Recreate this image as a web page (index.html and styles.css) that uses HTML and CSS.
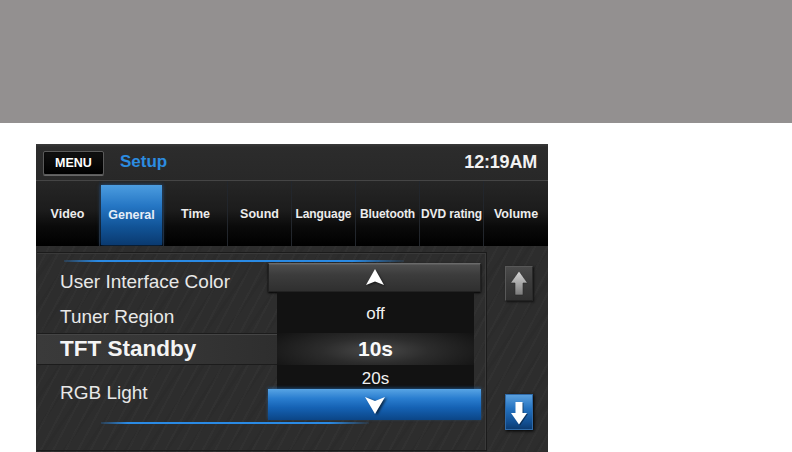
FILE: index.html
```html
<!DOCTYPE html>
<html>
<head>
<meta charset="utf-8">
<link rel="stylesheet" href="styles.css">
</head>
<body>
<div class="topband"></div>
<div class="device">
  <div class="header">
    <div class="menu-btn">MENU</div>
    <div class="title">Setup</div>
    <div class="clock">12:19AM</div>
  </div>
  <div class="tabs">
    <div class="tab">Video</div>
    <div class="tab active"><span>General</span></div>
    <div class="tab">Time</div>
    <div class="tab">Sound</div>
    <div class="tab narrow">Language</div>
    <div class="tab narrow">Bluetooth</div>
    <div class="tab narrow">DVD rating</div>
    <div class="tab">Volume</div>
  </div>
  <div class="content">
    <div class="panel">
      <div class="blueline top"></div>
      <div class="panel-body">
        <div class="labels">
          <div class="row r1">User Interface Color</div>
          <div class="row r2">Tuner Region</div>
          <div class="row r3">TFT Standby</div>
          <div class="row r4">RGB Light</div>
        </div>
        <div class="picker">
          <div class="pbtn up">
            <svg width="18" height="17" viewBox="0 0 18 17"><path d="M9 0 L18 16 L9 12.5 L0 16 Z" fill="#fff"/></svg>
          </div>
          <div class="plist">
            <div class="pitem off">off</div>
            <div class="pitem sel">10s</div>
            <div class="pitem next">20s</div>
          </div>
          <div class="pbtn down">
            <svg width="20" height="18" viewBox="0 0 20 18"><path d="M0 0 L10 4 L20 0 L10 17 Z" fill="#fff"/></svg>
          </div>
        </div>
      </div>
      <div class="blueline bottom"></div>
    </div>
    <div class="side">
      <div class="sbtn sup">
        <svg width="18" height="25" viewBox="0 0 18 25">
          <defs><linearGradient id="ga" x1="0" y1="0" x2="0" y2="1"><stop offset="0" stop-color="#d8d8d8"/><stop offset="1" stop-color="#7a7a7a"/></linearGradient></defs>
          <path d="M9 0 L17.5 12 L13 12 L13 24 L5 24 L5 12 L0.5 12 Z" fill="url(#ga)" stroke="#2a2a2a" stroke-width="0.6"/>
        </svg>
      </div>
      <div class="sbtn sdown">
        <svg width="16" height="23" viewBox="0 0 16 23">
          <path d="M4.5 0 L11.5 0 L11.5 11 L16 11 L8 22.5 L0 11 L4.5 11 Z" fill="#fff"/>
        </svg>
      </div>
    </div>
  </div>
</div>
</body>
</html>
```

FILE: styles.css
```css
html, body {
  margin: 0;
  padding: 0;
  background: #fff;
  font-family: "Liberation Sans", Arial, sans-serif;
}

.topband {
  height: 123px;
  background: #939090;
}

.device {
  margin: 21px 0 0 36px;
  width: 512px;
  height: 308px;
  overflow: hidden;
  background: #2c2c2c;
  display: flex;
  flex-direction: column;
}

.header {
  height: 36px;
  flex: none;
  display: flex;
  align-items: center;
  padding: 0 11px 0 7px;
  background: linear-gradient(#3a3a3a 0, #2c2c2c 3px, #282828 100%);
  border-bottom: 1px solid #454545;
}

.menu-btn {
  width: 59px;
  height: 22px;
  margin-top: 1px;
  background: linear-gradient(#111, #000);
  border: 1px solid #5a5a5a;
  border-radius: 2px;
  box-shadow: inset 0 0 2px #000, 0 1px 0 #666;
  color: #fff;
  font-weight: bold;
  font-size: 12.5px;
  display: flex;
  align-items: center;
  justify-content: center;
}

.title {
  margin-left: 16px;
  color: #2c8ce0;
  font-weight: bold;
  font-size: 17px;
}

.clock {
  margin-left: auto;
  color: #f2f2f2;
  font-weight: bold;
  font-size: 18px;
  letter-spacing: -0.2px;
}

.tabs {
  height: 65px;
  flex: none;
  display: grid;
  grid-template-columns: repeat(8, 64px);
  background: linear-gradient(#262626 0, #1c1c1c 45%, #0a0a0a 70%, #000 100%);
}

.tab {
  display: flex;
  align-items: center;
  justify-content: center;
  color: #ececec;
  font-weight: bold;
  font-size: 12.5px;
  border-right: 1px solid #22262c;
  box-sizing: border-box;
  white-space: nowrap;
}

.tab.narrow {
  font-size: 12px;
  letter-spacing: -0.1px;
}

.tab:last-child {
  border-right: 0;
}

.tab.active {
  padding: 4px 1px 1px 1px;
  align-items: stretch;
}

.tab.active span {
  flex: 1;
  display: flex;
  align-items: center;
  justify-content: center;
  background: linear-gradient(#4c9de0 0, #2576c4 35%, #115396 70%, #0a3a70 100%);
  box-shadow: 0 0 4px rgba(40, 120, 210, 0.6);
  color: #e6eef8;
}

.content {
  flex: 1;
  display: flex;
  background-color: #2d2d2d;
  background-image:
    repeating-linear-gradient(118deg, rgba(255,255,255,0.018) 0 2px, transparent 2px 11px),
    repeating-linear-gradient(124deg, rgba(0,0,0,0.05) 0 3px, transparent 3px 17px);
}

.panel {
  margin: 6px 0 0 1px;
  width: 449px;
  height: 197px;
  border: 1px solid #1b1b1b;
  border-left: 0;
  box-shadow: inset -1px 1px 0 #3a3a3a;
  display: flex;
  flex-direction: column;
}

.blueline {
  height: 2px;
  flex: none;
  background: linear-gradient(90deg, rgba(40,130,220,0.2), #2a8ae4 10%, #2a8ae4 85%, rgba(40,130,220,0.1));
}

.blueline.top {
  margin: 7px 0 0 27px;
  width: 340px;
}

.blueline.bottom {
  margin: 1px 0 0 64px;
  width: 268px;
}

.panel-body {
  height: 158px;
  flex: none;
  margin-top: 1px;
  display: flex;
}

.labels {
  width: 240px;
  flex: none;
  display: flex;
  flex-direction: column;
  color: #e8e8e8;
  font-size: 19px;
}

.row {
  display: flex;
  align-items: center;
  padding-left: 23px;
  box-sizing: border-box;
  white-space: nowrap;
}

.r1 { height: 38px; }
.r2 { height: 32px; }
.r3 {
  height: 32px;
  font-size: 22.5px;
  font-weight: bold;
  color: #f4f4f4;
  border-top: 1px solid #1c1c1c;
  border-bottom: 1px solid #1c1c1c;
  background: linear-gradient(90deg, #3a3a3a, #353535 60%, #2e2e2e);
  box-shadow: inset 0 1px 0 #454545;
}
.r4 {
  height: 56px;
  align-items: flex-start;
  padding-top: 17px;
  line-height: 22px;
}

.picker {
  width: 213px;
  flex: none;
  margin-left: -9px;
  display: flex;
  flex-direction: column;
}

.pbtn {
  display: flex;
  align-items: center;
  justify-content: center;
  box-sizing: border-box;
}

.pbtn.up {
  height: 29px;
  background: linear-gradient(#4e4e4e, #3c3c3c 40%, #2f2f2f);
  border: 1px solid #222;
  border-top-color: #6a6a6a;
  box-shadow: inset 0 1px 0 #5a5a5a, 0 1px 2px #000;
}

.pbtn.up svg {
  filter: drop-shadow(1px 1px 1px rgba(0,0,0,0.6));
}

.pbtn.down {
  height: 31px;
  background: linear-gradient(#58a4e4 0, #2a7ed0 30%, #1562b4 60%, #0b4586 100%);
  box-shadow: 0 -1px 3px rgba(40,130,220,0.5);
}

.pbtn.down svg {
  filter: drop-shadow(2px 1px 1px rgba(0,0,0,0.6));
  margin-top: 2px;
}

.plist {
  height: 97px;
  margin: 0 7px 0 9px;
  background: #121212;
  display: flex;
  flex-direction: column;
  color: #f0f0f0;
  overflow: hidden;
}

.pitem {
  display: flex;
  align-items: center;
  justify-content: center;
  flex: none;
}

.pitem.off {
  height: 41px;
  font-size: 17px;
  padding-top: 3px;
  box-sizing: border-box;
}

.pitem.sel {
  height: 32px;
  font-size: 21px;
  font-weight: bold;
  color: #fafafa;
  background: radial-gradient(ellipse 60% 90% at 50% 55%, #4a4a4a 0, #2c2c2c 45%, #141414 100%);
}

.pitem.next {
  height: 24px;
  font-size: 17px;
  align-items: flex-start;
  line-height: 24px;
  margin-top: 2px;
}

.side {
  flex: 1;
  display: flex;
  flex-direction: column;
  padding-left: 18px;
}

.sbtn {
  width: 28px;
  display: flex;
  align-items: center;
  justify-content: center;
  box-sizing: border-box;
}

.sup {
  height: 35px;
  margin-top: 20px;
  background: linear-gradient(#4a4a4a, #3a3a3a 50%, #303030);
  border: 1px solid #585858;
  border-bottom-color: #222;
  border-right-color: #2a2a2a;
  box-shadow: 1px 1px 2px #111;
}

.sdown {
  height: 36px;
  margin-top: 93px;
  background: linear-gradient(#5aa0de, #2472c0 40%, #124f92 80%, #0c3c72);
  border: 1px solid #2f6aa8;
  box-shadow: 1px 1px 3px #000;
}

.sdown svg {
  filter: drop-shadow(1px 1px 0 rgba(0,0,0,0.4));
  margin-top: 3px;
}
```
